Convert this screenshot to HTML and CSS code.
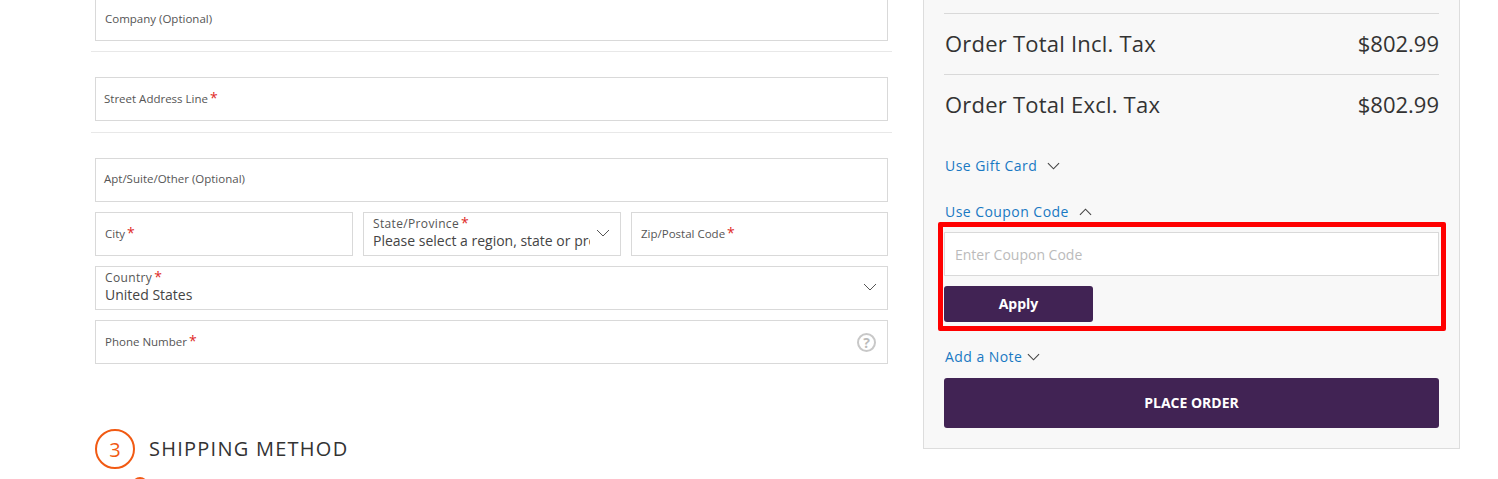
FILE: index.html
```html
<!DOCTYPE html>
<html lang="en">
<head>
<meta charset="utf-8">
<title>Checkout</title>
<link rel="stylesheet" href="styles.css">
</head>
<body>
<main class="page">
  <section class="form-col">
    <div class="field company"><span class="label">Company (Optional)</span></div>
    <hr class="divider">
    <div class="field tight"><span class="label">Street Address Line<i>*</i></span></div>
    <hr class="divider second">
    <div class="field tight apt"><span class="label">Apt/Suite/Other (Optional)</span></div>
    <div class="row">
      <div class="field"><span class="label">City<i>*</i></span></div>
      <div class="field select tight-select">
        <span class="cap">State/Province<i>*</i></span>
        <span class="value clipped">Please select a region, state or province</span>
        <svg class="chev" viewBox="0 0 14 8"><path d="M1 1l6 6 6-6"/></svg>
      </div>
      <div class="field"><span class="label">Zip/Postal Code<i>*</i></span></div>
    </div>
    <div class="field select">
      <span class="cap">Country<i>*</i></span>
      <span class="value">United States</span>
      <svg class="chev" viewBox="0 0 14 8"><path d="M1 1l6 6 6-6"/></svg>
    </div>
    <div class="field phone"><span class="label">Phone Number<i>*</i></span><span class="help">?</span></div>
    <h2 class="step"><span class="num">3</span>SHIPPING METHOD</h2>
    <span class="radio"></span>
  </section>
  <aside class="summary">
    <div class="total first"><span class="total-label">Order Total Incl. Tax</span><span class="amt">$802.99</span></div>
    <div class="total"><span class="total-label">Order Total Excl. Tax</span><span class="amt">$802.99</span></div>
    <div class="link gift">Use Gift Card<svg class="chev-s" viewBox="0 0 14 8"><path d="M1 1l6 6 6-6"/></svg></div>
    <div class="link coupon">Use Coupon Code<svg class="chev-s" viewBox="0 0 14 8"><path d="M1 7l6-6 6 6"/></svg></div>
    <div class="coupon-box">
      <div class="highlight"></div>
      <div class="coupon-input">Enter Coupon Code</div>
      <button class="apply">Apply</button>
    </div>
    <div class="link note">Add a Note<svg class="chev-s near" viewBox="0 0 14 8"><path d="M1 1l6 6 6-6"/></svg></div>
    <button class="place">PLACE ORDER</button>
  </aside>
</main>
</body>
</html>
```
FILE: styles.css
```css
* { box-sizing: border-box; }
html, body { margin: 0; height: 479px; overflow: hidden; background: #fff; }
body { font-family: "Open Sans", "Liberation Sans", sans-serif; color: #333; }
.page { display: flex; align-items: flex-start; height: 479px; overflow: hidden; padding-left: 91px; }

.form-col { width: 801px; margin-top: -3px; padding: 0 4px; position: relative; }
.field { position: relative; height: 44px; border: 1px solid #d9d9d9; background: #fff; display: flex; align-items: center; padding: 0 9px; min-width: 0; }
.field.tight { padding-left: 8px; }
.label { font-size: 11.5px; color: #555; line-height: 14px; margin-top: -1px; }
.apt .label { margin-top: -3px; }
.label i, .cap i { font-style: normal; color: #e02b27; font-size: 14px; margin-left: 2px; line-height: 10px; }
.divider { border: 0; border-top: 1px solid #e8e8e8; margin: 10px -4px 25px; height: 0; }
.divider.second { margin-top: 11px; }
.row { display: grid; grid-template-columns: 258px 258px 1fr; gap: 10px; margin: 10px 0; }
.select { display: block; padding: 4px 9px 0; }
.cap { display: block; font-size: 12px; letter-spacing: 0.35px; line-height: 14px; color: #555; }
.value { display: block; font-size: 14px; line-height: 19px; color: #444; white-space: nowrap; }
.clipped { overflow: hidden; margin-right: 21px; }
.chev { position: absolute; right: 10px; top: 16px; width: 14px; height: 8px; fill: none; stroke: #555; stroke-width: 1; }
.phone { margin-top: 10px; }
.help { position: absolute; right: 11px; top: 12px; width: 19px; height: 19px; border: 2px solid #c8c8c8; border-radius: 50%; color: #bbb; font-size: 14px; font-weight: 700; line-height: 15px; text-align: center; }
.step { display: flex; align-items: center; margin: 64px 0 0; font-size: 20px; font-weight: 500; letter-spacing: 1.25px; color: #333; height: 40px; }
.num { width: 40px; height: 40px; margin-top: 2px; border: 2px solid #f15a13; border-radius: 50%; color: #f15a13; display: flex; align-items: center; justify-content: center; font-size: 20px; letter-spacing: 0; margin-right: 14px; }
.radio { display: block; width: 16px; height: 16px; border: 2px solid #f15a13; border-radius: 50%; margin: 9px 0 0 37px; }

.summary { width: 537px; height: 449px; margin: 0 0 0 31px; background: #f8f8f8; border: 1px solid #ddd; border-top: 0; padding: 13px 20px 0; }
.total { display: flex; justify-content: space-between; align-items: center; height: 61px; padding-bottom: 2px; border-top: 1px solid #d9d9d9; font-size: 22px; color: #333; }
.total-label { letter-spacing: 0.22px; padding-left: 1px; }
.link { font-size: 14px; letter-spacing: 0.45px; color: #1979c3; padding-left: 1px; line-height: 20px; display: flex; align-items: center; }
.gift { margin-top: 21px; }
.coupon { margin-top: 26px; }
.note { margin-top: 25px; }
.chev-s { width: 13px; height: 8px; margin-left: 10px; fill: none; stroke: #444; stroke-width: 1.2; }
.chev-s.near { margin-left: 5px; }
.coupon-box { position: relative; margin-top: 10px; }
.highlight { position: absolute; left: -6px; right: -7px; top: -10px; height: 109px; border: 5px solid #f00; border-radius: 2px; }
.coupon-input { position: relative; height: 44px; background: #fff; border: 1px solid #d9d9d9; padding: 0 10px; font-size: 14px; line-height: 44px; color: #bbb; }
.apply { position: relative; display: block; width: 149px; height: 36px; margin-top: 10px; padding: 0 0 2px; background: #412354; border: 0; border-radius: 3px; color: #fff; font: 700 14px "Open Sans", sans-serif; }
.place { display: block; width: 100%; height: 50px; margin-top: 11px; padding: 0 0 1px; background: #412354; border: 0; border-radius: 3px; color: #fff; font: 700 14px "Open Sans", sans-serif; }
```
